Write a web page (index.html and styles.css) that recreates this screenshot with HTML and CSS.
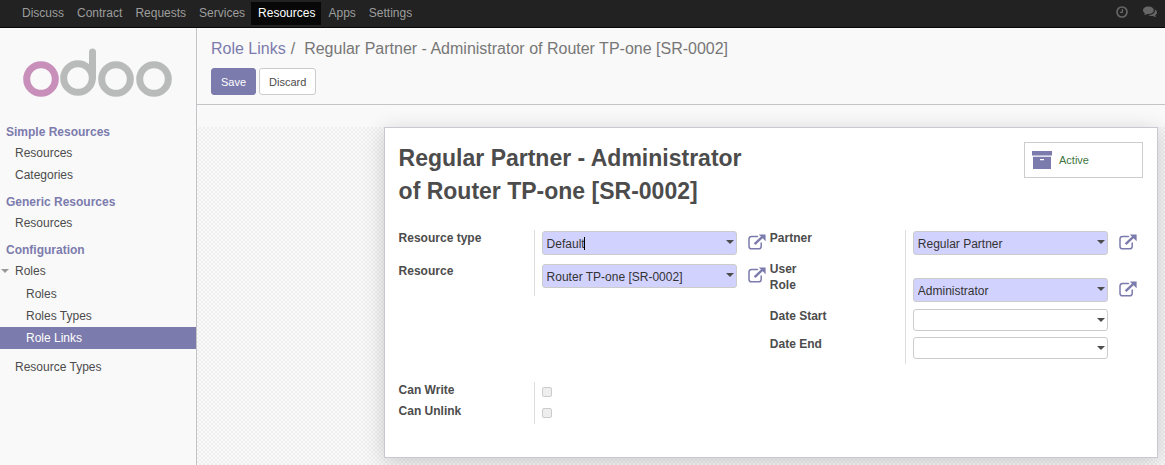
FILE: index.html
```html
<!DOCTYPE html>
<html lang="en">
<head>
  <meta charset="UTF-8" />
  <meta name="viewport" content="width=device-width, initial-scale=1.0"/>
  <title>Role Links - Odoo</title>
  <link rel="stylesheet" href="styles.css">
</head>
<body>

<svg width="0" height="0" class="sprite">
  <symbol id="icon-external" viewBox="0 0 18 16">
    <path d="M9.5 2.4H3.6Q1 2.4 1 5v7.2q0 2.6 2.6 2.6h7q2.6 0 2.6-2.6V9" fill="none" stroke="currentColor" stroke-width="1.5" stroke-linecap="round"/>
    <path d="M6.6 10.2L14.6 2.6" stroke="currentColor" stroke-width="2.4"/>
    <path d="M10.8 0.4H17.6V7.2Z" fill="currentColor"/>
  </symbol>
</svg>

<!-- TOP MENU -->
<nav class="navbar">
  <ul class="menu">
    <li><a href="#">Discuss</a></li>
    <li><a href="#">Contract</a></li>
    <li><a href="#">Requests</a></li>
    <li><a href="#">Services</a></li>
    <li><a href="#" class="active">Resources</a></li>
    <li><a href="#">Apps</a></li>
    <li><a href="#">Settings</a></li>
  </ul>
  <div class="systray">
    <a href="#" aria-label="Activities">
      <svg width="12" height="12" viewBox="0 0 12 12" fill="none" stroke="currentColor">
        <circle cx="6" cy="6" r="5" stroke-width="1.7"/>
        <path d="M6.4 3v3.4H4" stroke-width="1.2"/>
      </svg>
    </a>
    <a href="#" aria-label="Messages">
      <svg width="14" height="12" viewBox="0 0 14 12" fill="currentColor">
        <path d="M5.4 0.4C8.4 0.4 10.8 2 10.8 4.2S8.4 8 5.4 8L4.2 7.9C3.3 8.7 2.2 9 1 9.1C1.5 8.6 1.9 8.1 2 7.2C0.8 6.5 0 5.4 0 4.2C0 2 2.4 0.4 5.4 0.4Z"/>
        <path d="M11.7 3.4C13.1 4.1 14 5.1 14 6.4C14 7.5 13.3 8.5 12.2 9.2C12.3 10 12.6 10.5 13.1 11.1C12 11 10.9 10.6 10 9.9C8.2 10.2 6.4 9.8 5.3 9C9 9 11.9 7.2 11.9 4.4Z"/>
      </svg>
    </a>
  </div>
</nav>

<div class="webclient">
  <!-- SIDEBAR -->
  <aside class="sidebar">
    <a href="#" class="logo" aria-label="Odoo">
      <svg width="151" height="50" viewBox="0 0 151 50" fill="none" stroke="#b9bbba" stroke-width="7">
        <circle cx="19" cy="31" r="14.3" stroke="#c78fb9"/>
        <circle cx="56" cy="30" r="14.3"/>
        <path d="M70.5 4V30" stroke-linecap="round"/>
        <circle cx="94" cy="31" r="14.3"/>
        <circle cx="132" cy="31" r="14.3"/>
      </svg>
    </a>

    <h4>Simple Resources</h4>
    <ul>
      <li><a href="#">Resources</a></li>
      <li><a href="#">Categories</a></li>
    </ul>

    <h4>Generic Resources</h4>
    <ul>
      <li><a href="#">Resources</a></li>
    </ul>

    <h4>Configuration</h4>
    <ul>
      <li>
        <a href="#" class="toggle">Roles</a>
        <ul class="submenu">
          <li><a href="#">Roles</a></li>
          <li><a href="#">Roles Types</a></li>
          <li><a href="#" class="selected">Role Links</a></li>
        </ul>
      </li>
      <li><a href="#">Resource Types</a></li>
    </ul>
  </aside>

  <main class="content">
    <!-- CONTROL PANEL -->
    <header class="control-panel">
      <div class="breadcrumb">
        <a href="#">Role Links</a>
        <span class="separator">/</span>
        <span>Regular Partner - Administrator of Router TP-one [SR-0002]</span>
      </div>
      <div class="buttons">
        <button type="submit" form="roleLink" class="btn btn-primary">Save</button>
        <button type="button" class="btn">Discard</button>
      </div>
    </header>

    <!-- FORM -->
    <div class="form-view">
      <form id="roleLink" class="sheet">
        <div class="sheet-head">
          <h1>Regular Partner - Administrator of Router TP-one [SR-0002]</h1>
          <button type="button" class="stat-button">
            <svg width="20" height="18" viewBox="0 0 20 18" fill="#7c7bad">
              <path d="M0 0H20V4.5H0Z"/>
              <path d="M1 5.8H19V18H1ZM8 8V9.2H12V8Z" fill-rule="evenodd"/>
            </svg>
            Active
          </button>
        </div>

        <div class="groups">
          <div class="group group-left">
            <div class="row">
              <label for="resourceType">Resource type</label>
              <div class="cell">
                <div class="combo required">
                  <input type="text" id="resourceType" value="Default" />
                  <span class="cursor"></span>
                  <button type="button" class="caret" aria-label="Open list"></button>
                </div>
                <button type="button" class="external" aria-label="Open record"><svg width="18" height="16"><use href="#icon-external"/></svg></button>
              </div>
            </div>
            <div class="row">
              <label for="resource">Resource</label>
              <div class="cell">
                <div class="combo required">
                  <input type="text" id="resource" value="Router TP-one [SR-0002]" />
                  <button type="button" class="caret" aria-label="Open list"></button>
                </div>
                <button type="button" class="external" aria-label="Open record"><svg width="18" height="16"><use href="#icon-external"/></svg></button>
              </div>
            </div>
          </div>

          <div class="group">
            <div class="row">
              <label for="partner">Partner</label>
              <div class="cell">
                <div class="combo required">
                  <input type="text" id="partner" value="Regular Partner" />
                  <button type="button" class="caret" aria-label="Open list"></button>
                </div>
                <button type="button" class="external" aria-label="Open record"><svg width="18" height="16"><use href="#icon-external"/></svg></button>
              </div>
            </div>
            <div class="row row-tall">
              <label for="role">User<br>Role</label>
              <div class="cell">
                <div class="combo required">
                  <input type="text" id="role" value="Administrator" />
                  <button type="button" class="caret" aria-label="Open list"></button>
                </div>
                <button type="button" class="external" aria-label="Open record"><svg width="18" height="16"><use href="#icon-external"/></svg></button>
              </div>
            </div>
            <div class="row row-date">
              <label for="dateStart">Date Start</label>
              <div class="cell">
                <div class="combo">
                  <input type="text" id="dateStart" />
                  <button type="button" class="caret" aria-label="Open calendar"></button>
                </div>
              </div>
            </div>
            <div class="row row-date">
              <label for="dateEnd">Date End</label>
              <div class="cell">
                <div class="combo">
                  <input type="text" id="dateEnd" />
                  <button type="button" class="caret" aria-label="Open calendar"></button>
                </div>
              </div>
            </div>
          </div>

          <div class="group">
            <div class="row row-check">
              <label for="canWrite">Can Write</label>
              <div class="cell"><input type="checkbox" id="canWrite" /></div>
            </div>
            <div class="row row-check">
              <label for="canUnlink">Can Unlink</label>
              <div class="cell"><input type="checkbox" id="canUnlink" /></div>
            </div>
          </div>
        </div>
      </form>
    </div>
  </main>
</div>

</body>
</html>
```
FILE: styles.css
```css
* {
  box-sizing: border-box;
}

body {
  margin: 0;
  height: 100vh;
  display: flex;
  flex-direction: column;
  overflow: hidden;
  background: #f9f9f9;
  color: #4c4c4c;
  font-family: "Liberation Sans", Arial, sans-serif;
  font-size: 12px;
  line-height: 16px;
}

ul {
  list-style: none;
  margin: 0;
  padding: 0;
}

a {
  color: inherit;
  text-decoration: none;
}

button, input {
  font-family: inherit;
}

button {
  cursor: pointer;
}

.sprite {
  position: absolute;
}

/* top menu */
.navbar {
  flex: none;
  display: flex;
  justify-content: space-between;
  padding: 2px 8px 2px 15px;
  background: #222;
  border-bottom: 1px solid #080808;
  color: #9d9d9d;
}

.menu {
  display: flex;
}

.menu a {
  display: block;
  padding: 0 6px 0 7px;
  line-height: 23px;
}

.menu .active {
  background: #080808;
  color: #fff;
}

.systray {
  display: flex;
  align-items: center;
  gap: 15px;
  padding-bottom: 3px;
  color: #666;
}

.systray svg {
  display: block;
}

.webclient {
  flex: 1;
  display: flex;
  min-height: 0;
}

/* sidebar */
.sidebar {
  flex: none;
  width: 197px;
  border-right: 1px solid #c4c4c8;
}

.logo {
  display: block;
  padding: 20px 0 18px 22px;
}

.logo svg {
  display: block;
}

.sidebar h4 {
  margin: 7px 0 0;
  padding-left: 6px;
  color: #7c7bad;
  font-size: 12px;
  line-height: 19px;
}

.sidebar li a {
  display: block;
  padding-left: 15px;
  line-height: 22px;
}

.sidebar .toggle::before {
  content: "";
  float: left;
  margin: 9px 0 0 -14px;
  border: 4px solid transparent;
  border-top-color: #999;
  border-bottom: 0;
}

.submenu {
  padding: 1px 0 7px;
}

.sidebar .submenu a {
  padding-left: 26px;
}

.sidebar .selected {
  background: #7c7bad;
  color: #fff;
}

.content {
  flex: 1;
  min-width: 0;
  display: flex;
  flex-direction: column;
}

/* control panel */
.control-panel {
  padding: 11px 14px 9px;
  border-bottom: 1px solid #c4c4c8;
}

.breadcrumb {
  display: flex;
  margin-bottom: 9px;
  color: #777;
  font-size: 16px;
  line-height: 20px;
}

.breadcrumb a {
  color: #7c7bad;
}

.separator {
  margin: 0 9px 0 5px;
}

.buttons {
  display: flex;
  gap: 3px;
}

.btn {
  padding: 2px 9px 0;
  border: 1px solid #ccc;
  border-radius: 3px;
  background: #fff;
  color: #4c4c4c;
  font-size: 11px;
  line-height: 23px;
}

.btn-primary {
  background: #7c7bad;
  border-color: #7c7bad;
  color: #fff;
}

/* form */
.form-view {
  flex: 1;
  margin-top: 22px;
  background: repeating-conic-gradient(#eee 0 25%, #fafafa 0 50%) 0 0 / 4px 4px;
}

.sheet {
  width: 80%;
  margin: 0 7px 0 auto;
  padding: 14px 14px 33px;
  background: #fff;
  border: 1px solid #c8c8d3;
  box-shadow: 0 4px 20px rgba(0, 0, 0, 0.18);
}

.sheet-head {
  display: flex;
  justify-content: space-between;
  align-items: flex-start;
  margin-bottom: 22px;
}

h1 {
  width: 49%;
  margin: 0;
  font-size: 23px;
  line-height: 33px;
}

.stat-button {
  display: flex;
  align-items: center;
  gap: 7px;
  width: 119px;
  height: 36px;
  padding: 0 7px;
  background: #fff;
  border: 1px solid #ccc;
  color: #3c763d;
  font-size: 11px;
}

.groups {
  display: grid;
  grid-template-columns: 1fr 1fr;
  row-gap: 18px;
  padding-right: 2px;
}

.row {
  display: flex;
}

.row label {
  flex: none;
  width: 135px;
  font-weight: bold;
}

.cell {
  flex: 1;
  display: flex;
  align-items: flex-start;
  padding: 1px 3px 6px 7px;
  border-left: 1px solid #ddd;
}

.group-left .cell {
  padding-bottom: 8px;
}

.row-tall {
  min-height: 47px;
}

.row-tall .cell {
  align-items: flex-end;
}

.row-date .cell {
  padding-bottom: 5px;
}

.combo {
  position: relative;
  flex: none;
  width: 195px;
}

.combo input {
  display: block;
  width: 100%;
  height: 22px;
  padding: 2px 20px 0 4px;
  border: 1px solid #ccc;
  border-radius: 3px;
  background: #fff;
  color: #333;
  font-size: 12px;
}

.required input {
  height: 24px;
  background: #d2d2ff;
}

.caret {
  position: absolute;
  top: 0;
  right: 0;
  width: 14px;
  height: 22px;
  padding: 0;
  border: 0;
  background: none;
}

.caret::before {
  content: "";
  display: block;
  width: 0;
  margin-left: 3px;
  border: 4px solid transparent;
  border-top-color: #4c4c4c;
  border-bottom: 0;
}

.cursor {
  position: absolute;
  top: 6px;
  left: 42px;
  width: 1px;
  height: 13px;
  background: #000;
}

.external {
  margin: 3px 0 0 11px;
  padding: 0;
  border: 0;
  background: none;
  color: #7c7bad;
}

.row-tall .external {
  margin-bottom: 5px;
}

.external svg {
  display: block;
}

.row-check .cell {
  padding: 5px 0 6px 7px;
}

.row-check input {
  appearance: none;
  width: 10px;
  height: 10px;
  margin: 0;
  border: 1px solid #ccc;
  border-radius: 2px;
  background: #eee;
}
```
